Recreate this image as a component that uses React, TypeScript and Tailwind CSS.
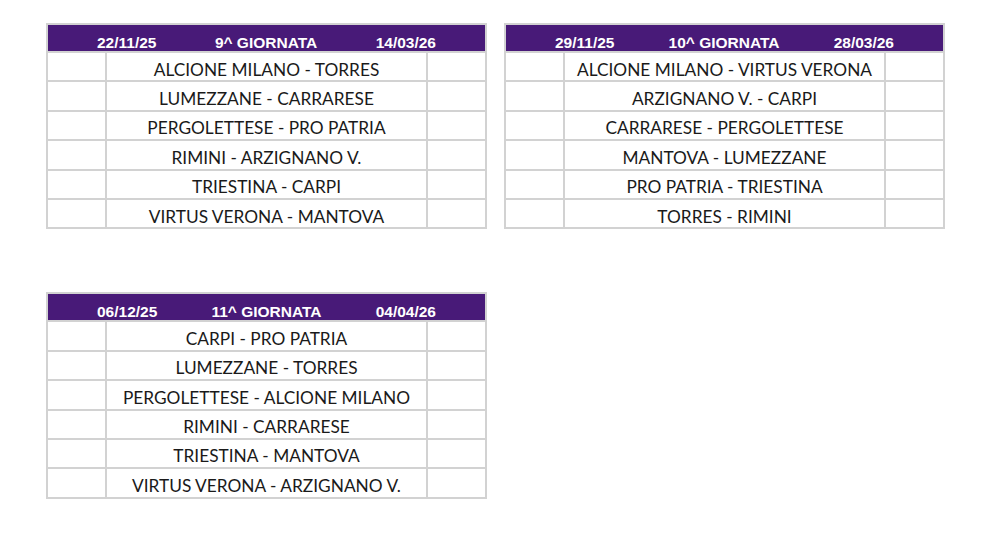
import React from "react";

type Round = {
  from: string;
  title: string;
  to: string;
  matches: string[];
};

const rounds: Round[] = [
  {
    from: "22/11/25",
    title: "9^ GIORNATA",
    to: "14/03/26",
    matches: [
      "ALCIONE MILANO - TORRES",
      "LUMEZZANE - CARRARESE",
      "PERGOLETTESE - PRO PATRIA",
      "RIMINI - ARZIGNANO V.",
      "TRIESTINA - CARPI",
      "VIRTUS VERONA - MANTOVA",
    ],
  },
  {
    from: "29/11/25",
    title: "10^ GIORNATA",
    to: "28/03/26",
    matches: [
      "ALCIONE MILANO - VIRTUS VERONA",
      "ARZIGNANO V. - CARPI",
      "CARRARESE - PERGOLETTESE",
      "MANTOVA - LUMEZZANE",
      "PRO PATRIA - TRIESTINA",
      "TORRES - RIMINI",
    ],
  },
  {
    from: "06/12/25",
    title: "11^ GIORNATA",
    to: "04/04/26",
    matches: [
      "CARPI - PRO PATRIA",
      "LUMEZZANE - TORRES",
      "PERGOLETTESE - ALCIONE MILANO",
      "RIMINI - CARRARESE",
      "TRIESTINA - MANTOVA",
      "VIRTUS VERONA - ARZIGNANO V.",
    ],
  },
];

function RoundTable({ round }: { round: Round }) {
  return (
    <div className="w-[441px] border-2 border-[#d2d2d2]">
      {/* intestazione */}
      <div className="flex h-[26px] items-center justify-between bg-[#481a78] px-[49px] pt-[9px] font-['Liberation_Sans',sans-serif] text-[15.5px] font-bold leading-none text-white">
        <span>{round.from}</span>
        <span>{round.title}</span>
        <span>{round.to}</span>
      </div>
      {round.matches.map((m, i) => (
        <div
          key={i}
          className="grid h-[29.4px] grid-cols-[59px_321px_1fr] border-t-2 border-[#d2d2d2] font-['Lato',sans-serif] text-[17.3px] text-[#1a1a1a]"
        >
          <div className="border-r-2 border-[#d2d2d2]" />
          <div className="flex items-center justify-center border-r-2 border-[#d2d2d2] pt-[5px] leading-none">
            {m}
          </div>
          <div />
        </div>
      ))}
    </div>
  );
}

export default function App() {
  return (
    <div className="min-h-[538px] w-[1000px] bg-white pl-[46px] pt-[23px]">
      <div className="flex gap-[17px]">
        <RoundTable round={rounds[0]} />
        <RoundTable round={rounds[1]} />
      </div>
      <div className="mt-[63px]">
        <RoundTable round={rounds[2]} />
      </div>
    </div>
  );
}
